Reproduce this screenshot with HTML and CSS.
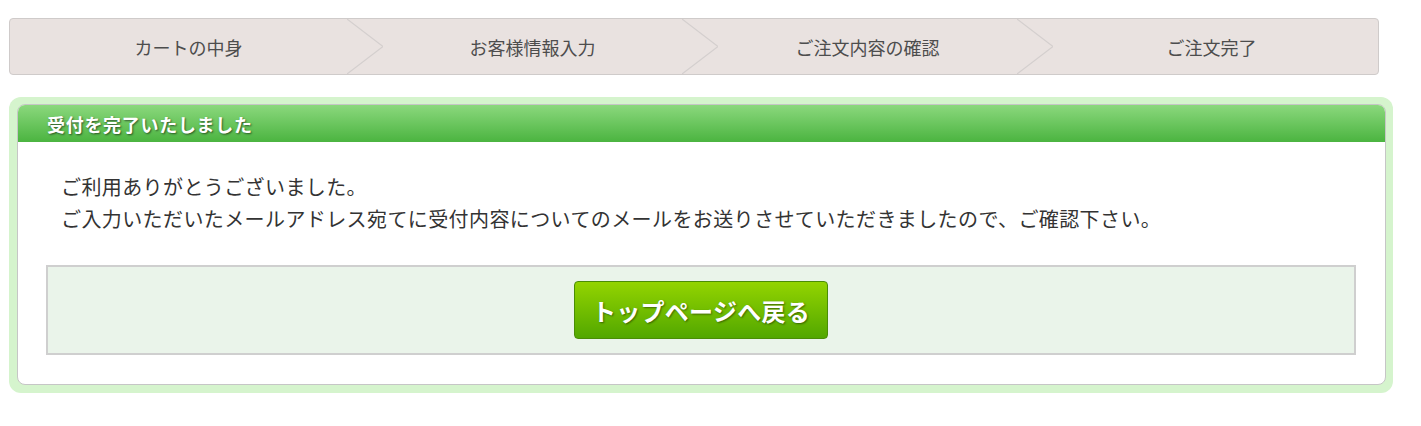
FILE: index.html
```html
<!DOCTYPE html>
<html lang="ja">
<head>
    <meta charset="UTF-8">
    <meta name="viewport" content="width=device-width, initial-scale=1.0">
    <title>ご注文完了</title>
    <link rel="stylesheet" href="styles.css">
</head>
<body>
    <div class="page">
        <ol class="steps">
            <li class="step first">カートの中身</li>
            <li class="chev"><svg viewBox="0 0 36 55" preserveAspectRatio="none"><polyline points="0,0 36,27.5 0,55"/></svg></li>
            <li class="step">お客様情報入力</li>
            <li class="chev"><svg viewBox="0 0 36 55" preserveAspectRatio="none"><polyline points="0,0 36,27.5 0,55"/></svg></li>
            <li class="step">ご注文内容の確認</li>
            <li class="chev"><svg viewBox="0 0 36 55" preserveAspectRatio="none"><polyline points="0,0 36,27.5 0,55"/></svg></li>
            <li class="step last">ご注文完了</li>
        </ol>

        <div class="frame">
            <div class="card">
                <h2 class="card-head">受付を完了いたしました</h2>
                <div class="card-body">
                    <p class="msg">
                        ご利用ありがとうございました。<br>
                        ご入力いただいたメールアドレス宛てに受付内容についてのメールをお送りさせていただきましたので、ご確認下さい。
                    </p>
                    <div class="actions">
                        <a class="btn" href="#">トップページへ戻る</a>
                    </div>
                </div>
            </div>
        </div>
    </div>
</body>
</html>
```

FILE: styles.css
```css
html {
    font-family: "Noto Sans CJK JP", "Noto Sans", sans-serif;
}
body {
    margin: 0;
    background: #fff;
}
.page {
    padding: 18px 0 0 9px;
}

/* step bar */
.steps {
    display: grid;
    grid-template-columns: 337px 36px 299px 36px 299px 36px 1fr;
    width: 1370px;
    height: 57px;
    box-sizing: border-box;
    margin: 0;
    padding: 0;
    list-style: none;
    background: #e9e2e0;
    border: 1px solid #cfcbca;
    border-radius: 4px;
}
.step {
    display: flex;
    align-items: center;
    justify-content: center;
    font-size: 18px;
    color: #4d4d4d;
    line-height: 1;
}
.step.first {
    padding-left: 20px;
}
.step.last {
    padding-right: 8px;
}
.chev svg {
    display: block;
    width: 36px;
    height: 55px;
}
.chev polyline {
    fill: none;
    stroke: #d4cfce;
    stroke-width: 1.2;
}

/* result box */
.frame {
    width: 1384px;
    box-sizing: border-box;
    margin-top: 22px;
    padding: 7px 7px 8px 8px;
    background: #d5f4cd;
    border-radius: 12px;
}
.card {
    background: #fff;
    border: 1px solid #c6c6c6;
    border-radius: 8px;
    overflow: hidden;
}
.card-head {
    margin: 0;
    height: 37px;
    padding-left: 29px;
    display: flex;
    align-items: center;
    font-size: 18px;
    font-weight: bold;
    letter-spacing: .7px;
    color: #fff;
    text-shadow: 1px 1px 2px rgba(0, 0, 0, .55);
    background: linear-gradient(#8bd87d, #4bb440);
}
.card-body {
    padding: 29px 29px 29px 28px;
}
.msg {
    margin: 0 0 30px 15px;
    font-size: 20px;
    line-height: 32px;
    color: #333;
    letter-spacing: .4px;
}
.actions {
    display: flex;
    justify-content: center;
    padding: 14px 0;
    background: #eaf4ea;
    border: 2px solid #cfcfcf;
}
.btn {
    display: flex;
    align-items: center;
    justify-content: center;
    width: 254px;
    height: 58px;
    box-sizing: border-box;
    border: 1px solid #4a8d06;
    border-radius: 4px;
    background: linear-gradient(#93d400, #52a700);
    color: #fff;
    font-size: 24px;
    font-weight: bold;
    letter-spacing: .3px;
    text-decoration: none;
    text-shadow: 1px 1px 2px rgba(0, 0, 0, .45);
}
```
